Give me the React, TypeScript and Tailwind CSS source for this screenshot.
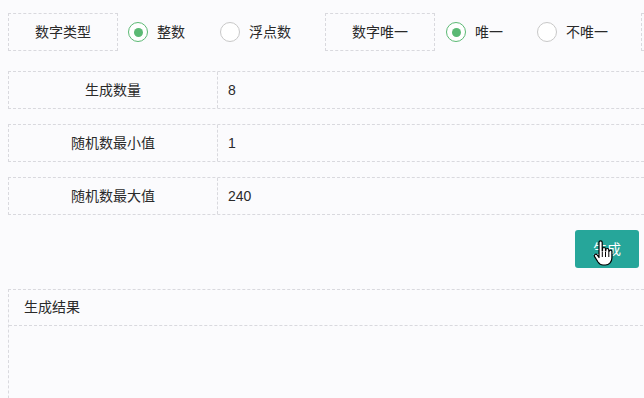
import React, { useState } from 'react';

const font = { fontFamily: '"Liberation Sans", "Noto Sans CJK SC", sans-serif' };

const Radio: React.FC<{ checked: boolean; label: string; onClick: () => void }> = ({ checked, label, onClick }) => (
  <button onClick={onClick} className="flex items-center gap-[9px] text-[14px] text-[#2a2a2a]">
    <span
      className={`w-[20px] h-[20px] rounded-full border flex items-center justify-center bg-white ${
        checked ? 'border-[#5bb974]' : 'border-[#c8c8c8]'
      }`}
    >
      {checked && <span className="w-[9px] h-[9px] rounded-full bg-[#5bb974]" />}
    </span>
    <span>{label}</span>
  </button>
);

const Field: React.FC<{ label: string; value: string }> = ({ label, value }) => (
  <div className="flex h-[38px] border border-dashed border-[#d9d9de] mr-[-40px] bg-[#fbfbfd]">
    <div className="w-[209px] shrink-0 flex items-center justify-center border-r border-dashed border-[#d9d9de] text-[14px] text-[#2a2a2a]">
      {label}
    </div>
    <div className="flex-1 flex items-center px-[10px] text-[14px] text-[#2a2a2a]">{value}</div>
  </div>
);

const HandCursor = () => (
  <svg width="22" height="28" viewBox="0 0 22 28" className="absolute left-[18px] top-[10px]">
    <path
      d="M6 2.5c0-1 .7-1.7 1.6-1.7S9.2 1.5 9.2 2.5V11h.3V9c0-.9.7-1.5 1.5-1.5s1.5.6 1.5 1.5v2h.3V10c0-.9.7-1.5 1.5-1.5s1.5.6 1.5 1.5v1.5h.3c0-.9.7-1.4 1.4-1.4.8 0 1.4.6 1.4 1.4V18c0 3.8-2.6 7-6.5 7H10c-2.4 0-3.8-1.2-5-3L1.6 16.6c-.5-.8-.3-1.7.4-2.1.8-.5 1.7-.2 2.2.5L6 17.5z"
      fill="#fff"
      stroke="#000"
      strokeWidth="1.2"
      strokeLinejoin="round"
    />
    <path d="M9.3 12v5M12.5 12v5M15.8 12v5" stroke="#000" strokeWidth="1" />
  </svg>
);

export default function App() {
  const [numType, setNumType] = useState('int');
  const [unique, setUnique] = useState(true);

  return (
    <div className="min-h-screen w-full overflow-hidden bg-[#fbfbfd]" style={font}>
      <div className="pl-2 pr-[5px] pt-[13px]">
        <div className="flex items-center whitespace-nowrap">
          <div className="w-[110px] h-[38px] shrink-0 flex items-center justify-center border border-dashed border-[#d9d9de] text-[14px] text-[#2a2a2a]">
            数字类型
          </div>
          <div className="ml-[10px] shrink-0">
            <Radio checked={numType === 'int'} label="整数" onClick={() => setNumType('int')} />
          </div>
          <div className="ml-[35px] shrink-0">
            <Radio checked={numType === 'float'} label="浮点数" onClick={() => setNumType('float')} />
          </div>
          <div className="ml-[34px] w-[110px] h-[38px] shrink-0 flex items-center justify-center border border-dashed border-[#d9d9de] text-[14px] text-[#2a2a2a]">
            数字唯一
          </div>
          <div className="ml-[11px] shrink-0">
            <Radio checked={unique} label="唯一" onClick={() => setUnique(true)} />
          </div>
          <div className="ml-[34px] shrink-0">
            <Radio checked={!unique} label="不唯一" onClick={() => setUnique(false)} />
          </div>
          <div className="ml-[33px] w-[110px] h-[38px] shrink-0 border border-dashed border-[#d9d9de]" />
        </div>

        <div className="mt-[20px] flex flex-col gap-[15px]">
          <Field label="生成数量" value="8" />
          <Field label="随机数最小值" value="1" />
          <Field label="随机数最大值" value="240" />
        </div>

        <div className="mt-[15px] flex justify-end">
          <button className="relative w-[64px] h-[38px] rounded-[3px] bg-[#26a69a] text-white text-[14px]">
            生成
            <HandCursor />
          </button>
        </div>

        <div className="mt-[21px] border border-dashed border-[#d9d9de] mr-[-40px] h-[140px]">
          <div className="h-[36px] flex items-center px-[15px] border-b border-dashed border-[#d9d9de] text-[14px] text-[#2a2a2a]">
            生成结果
          </div>
        </div>
      </div>
    </div>
  );
}
